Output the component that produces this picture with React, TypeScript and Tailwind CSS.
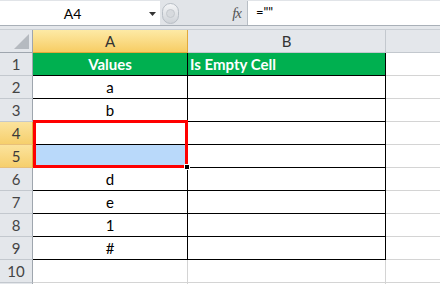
import React from 'react';

type Row = { n: number; a: string; b: string };

const rows: Row[] = [
  { n: 1, a: 'Values', b: 'Is Empty Cell' },
  { n: 2, a: 'a', b: '' },
  { n: 3, a: 'b', b: '' },
  { n: 4, a: '', b: '' },
  { n: 5, a: '', b: '' },
  { n: 6, a: 'd', b: '' },
  { n: 7, a: 'e', b: '' },
  { n: 8, a: '1', b: '' },
  { n: 9, a: '#', b: '' },
  { n: 10, a: '', b: '' },
  { n: 11, a: '', b: '' },
];

function RowHeader({ n }: { n: number }) {
  const picked = n === 4 || n === 5;
  return (
    <div
      className={`w-[33px] shrink-0 flex items-center justify-center border-r border-b text-[15px] ${
        picked
          ? 'bg-gradient-to-b from-[#fbe39c] to-[#f6cf6c] border-r-[#e2a93a] border-b-[#e8c079] text-[#3a3a3a]'
          : 'bg-[#e4e7eb] border-r-[#9fa6ae] border-b-[#c3c8ce] text-[#444]'
      }`}
    >
      {/* row 11 only peeks in at the bottom edge */}
      {n <= 10 ? n : ''}
    </div>
  );
}

export default function App() {
  return (
    <div className="w-[440px] h-[284px] overflow-hidden bg-white font-['Lato',sans-serif] select-none">
      {/* Formula bar */}
      <div className="h-[26px] flex bg-[#e1e4e8] border-b border-[#a9b0b8] pt-px">
        <div className="w-[160px] h-[24px] bg-white flex items-center relative">
          <span className="w-[145px] text-center text-[14px] text-black">A4</span>
          <svg className="absolute left-[149px] top-[11px]" width="7" height="4" viewBox="0 0 7 4">
            <path d="M0 0 H7 L3.5 4 Z" fill="#333" />
          </svg>
        </div>
        <div className="w-[87px] h-[24px] flex items-center">
          <div className="ml-[2px] w-[17px] h-[21px] rounded-full bg-gradient-to-b from-[#f4f5f7] to-[#cfd3d8] border border-[#b8bec5] flex items-center justify-center">
            <div className="w-[9px] h-[9px] rounded-full bg-[#d7dade] border border-[#c4c8cd]" />
          </div>
          <span className="ml-auto mr-[6px] font-['Liberation_Serif',serif] italic text-[15px] text-[#555] tracking-[-1px]">
            fx
          </span>
        </div>
        <div className="flex-1 h-[24px] bg-white border-l border-[#b8bec5] flex items-center pl-[8px] text-[13px] text-black">
          =""
        </div>
      </div>
      <div className="h-[4px] bg-[#e4e7eb] border-b border-[#c9ced4]" />

      {/* Grid */}
      <div className="relative">
        {/* Column headers */}
        <div className="flex h-[23px] text-[15px]">
          <div className="w-[33px] shrink-0 relative bg-[#e4e7eb] border-r border-b border-[#9fa6ae]">
            <svg className="absolute right-[3px] bottom-[3px]" width="15" height="15" viewBox="0 0 15 15">
              <path d="M15 0 V15 H0 Z" fill="#b5bac0" />
            </svg>
          </div>
          <div className="w-[155px] shrink-0 flex items-center justify-center bg-gradient-to-b from-[#fdeaa5] to-[#f7cd63] border-r border-r-[#e2a93a] border-b border-b-[#e2a93a] text-[#333]">
            A
          </div>
          <div className="w-[198px] shrink-0 flex items-center justify-center bg-[#e4e7eb] border-r border-b border-[#c3c8ce] text-[#333]">
            B
          </div>
          <div className="flex-1 bg-[#e4e7eb] border-b border-[#c3c8ce]" />
        </div>

        {rows.map((r) => {
          const inTable = r.n <= 9;
          const head = r.n === 1;
          return (
            <div key={r.n} className="flex h-[23px] text-[15px]">
              <RowHeader n={r.n} />
              <div
                className={`w-[155px] shrink-0 flex items-center justify-center border-r border-b ${
                  inTable ? 'border-black' : 'border-[#d4d4d4]'
                } ${head ? 'bg-[#00b050] text-white font-bold' : r.n === 5 ? 'bg-[#b9d9fa]' : 'text-black'}`}
              >
                {r.a}
              </div>
              <div
                className={`w-[198px] shrink-0 flex items-center pl-[2px] border-r border-b ${
                  inTable ? 'border-black' : 'border-[#d4d4d4]'
                } ${head ? 'bg-[#00b050] text-white font-bold' : ''}`}
              >
                {r.b}
              </div>
              <div className="flex-1 border-b border-[#d4d4d4]" />
            </div>
          );
        })}

        {/* Selection A4:A5 */}
        <div className="absolute left-[33px] top-[90px] w-[155px] h-[48px] border-[3px] border-[#ff0000] pointer-events-none" />
        <div className="absolute left-[184px] top-[134px] w-[6px] h-[6px] bg-black border border-white" />
      </div>
    </div>
  );
}
